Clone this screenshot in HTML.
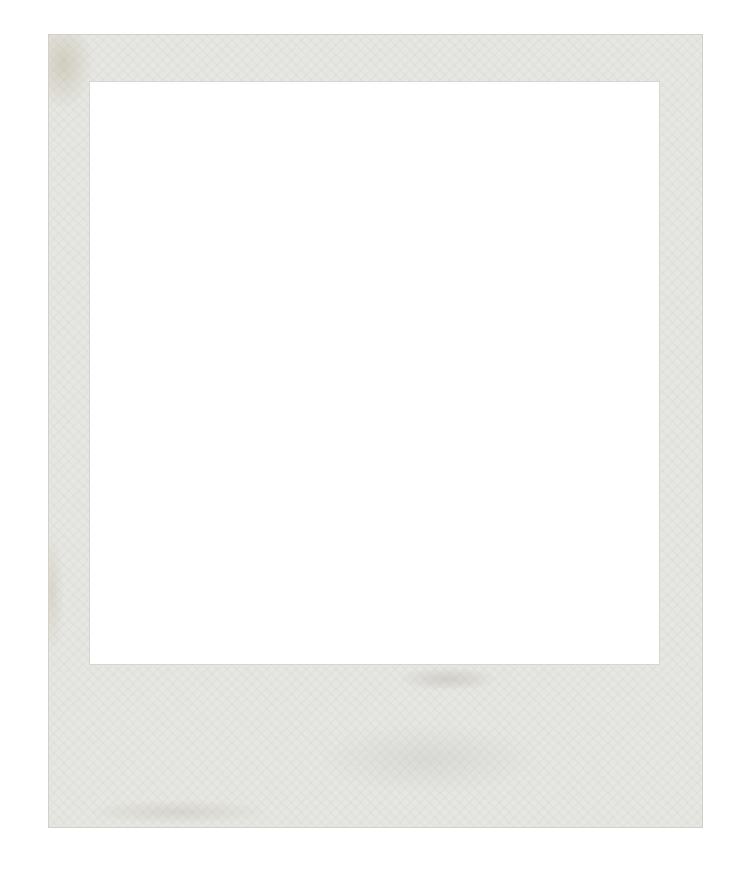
<!DOCTYPE html>
<html><head><meta charset="utf-8"><style>
html,body{margin:0;padding:0;background:#fff;width:745px;height:870px;overflow:hidden}
.frame{position:absolute;left:48px;top:34px;width:655px;height:794px;background:#e6e6e2;
box-shadow:inset 0 0 0 1px #d2d0c8;
background-image:
radial-gradient(ellipse 30px 45px at 15px 30px, rgba(180,170,140,.4), transparent),
radial-gradient(ellipse 50px 12px at 400px 645px, rgba(160,155,145,.3), transparent),
radial-gradient(ellipse 110px 35px at 380px 725px, rgba(180,180,180,.25), transparent),
radial-gradient(ellipse 90px 12px at 130px 778px, rgba(180,175,160,.3), transparent),
radial-gradient(ellipse 12px 60px at 4px 560px, rgba(190,180,150,.3), transparent),
repeating-linear-gradient(45deg, rgba(0,0,0,.02) 0 2px, transparent 2px 7px),
repeating-linear-gradient(-45deg, rgba(0,0,0,.02) 0 2px, transparent 2px 7px);
}
.win{position:absolute;left:90px;top:82px;width:569px;height:582px;background:#fff;box-shadow:0 0 0 1px #d6d6d2}
</style></head><body>
<div class="frame"></div>
<div class="win"></div>
</body></html>
